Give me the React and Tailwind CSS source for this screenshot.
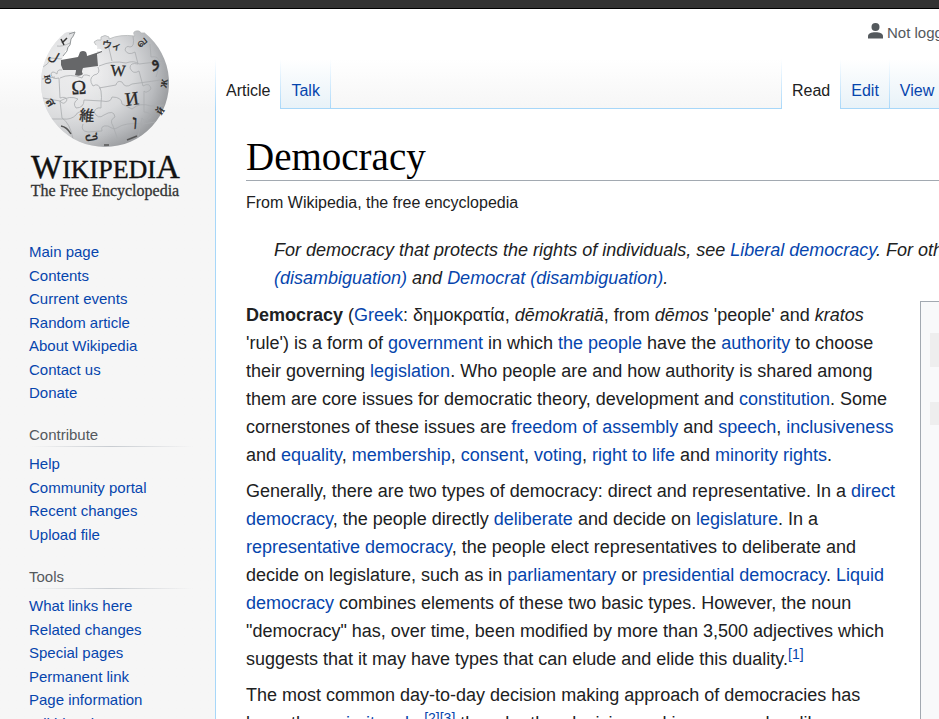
import clsx from "clsx";

const mainLinks = ["Main page", "Contents", "Current events", "Random article", "About Wikipedia", "Contact us", "Donate"];
const contributeLinks = ["Help", "Community portal", "Recent changes", "Upload file"];
const toolLinks = ["What links here", "Related changes", "Special pages", "Permanent link", "Page information", "Wikidata item"];

// letters scattered over the globe
const glyphs = [
  { t: "Ω", x: 79, y: 94, s: 20, r: -3 },
  { t: "W", x: 118, y: 76, s: 16, r: 3 },
  { t: "И", x: 132, y: 105, s: 19, r: -8 },
  { t: "維", x: 87, y: 121, s: 15, r: 5 },
  { t: "ウィ", x: 112, y: 49, s: 10, r: 8 },
  { t: "ו", x: 135, y: 129, s: 20, r: 4 },
  { t: "و", x: 154, y: 66, s: 18, r: -25 },
  { t: "வ", x: 141, y: 46, s: 11, r: -40 },
  { t: "უ", x: 94, y: 142, s: 15, r: 80 },
  { t: "ل", x: 54, y: 61, s: 13, r: 30 },
  { t: "ю", x: 50, y: 84, s: 12, r: 80 },
  { t: "ส", x: 51, y: 107, s: 13, r: 60 },
  { t: "ж", x: 162, y: 88, s: 12, r: -80 },
  { t: "й", x: 159, y: 115, s: 12, r: -55 },
];

function Logo() {
  return (
    <svg viewBox="25 25 160 180" className="block w-40" role="img" aria-label="Wikipedia, The Free Encyclopedia">
      <defs>
        <radialGradient id="ball" cx="92" cy="72" r="82" gradientUnits="userSpaceOnUse">
          <stop offset="0" stopColor="#ededee" />
          <stop offset="0.5" stopColor="#d9dadc" />
          <stop offset="0.78" stopColor="#b9bbbe" />
          <stop offset="1" stopColor="#96989b" />
        </radialGradient>
        <linearGradient id="leftGlow" x1="41" x2="112" y1="80" y2="80" gradientUnits="userSpaceOnUse">
          <stop offset="0" stopColor="#fff" stopOpacity="0.5" />
          <stop offset="1" stopColor="#fff" stopOpacity="0" />
        </linearGradient>
        <path
          id="shell"
          d="M75 32 L74 36 Q70 39 71 43 Q69 44 69 48 L65 51 Q64 57 61 60 L63 70 L76 69 L98 66 L97 51 L102 51 Q101 48 97 49 Q98 46 96 45 L94 42 Q97 39 101 40 L101 37 Q105 34 109 37 L109 39 Q120 34 135 36 Q132 32 136 31 Q140 30 141 33 L145 33 A64 64 0 1 1 65 33 Q69 31 75 32Z"
        />
        <clipPath id="shellClip"><use href="#shell" /></clipPath>
      </defs>
      <use href="#shell" fill="url(#ball)" />
      <use href="#shell" fill="url(#leftGlow)" />
      <g clipPath="url(#shellClip)" fill="none" stroke="#aaacaf" strokeWidth="0.8">
        <path d="M62 70 Q57 69 57 74 Q52 70 51 74 Q52 80 59 78 L60 98 Q66 96 67 100 Q64 106 60 101 L62 118 Q70 123 73 139" />
        <path d="M98 67 Q101 74 94 75 Q88 79 93 86 Q99 82 101 91 Q102 98 101 103 L101 108 Q96 107 94 112 Q98 120 104 115 Q114 109 115 117 Q109 120 113 126 L118 140" />
        <path d="M133 36 Q135 47 130 47 Q126 45 125 50 Q128 56 135 52 L138 64 Q130 62 130 68 Q133 75 139 71 L143 86 Q150 82 151 89 Q146 94 144 91 L144 112 Q151 112 150 118 Q144 122 142 118 L137 142" />
        <path d="M42 79 L55 77 M60 78 Q70 73 82 78 Q83 73 90 76 M99 88 L116 85 Q117 80 122 82 Q125 89 132 84 L168 79" />
        <path d="M43 98 L60 101 Q70 95 78 99 Q72 103 76 108 Q84 108 84 100 L102 101 Q111 103 112 97 Q122 97 122 104 L132 109 Q140 102 151 106 L164 105" />
        <path d="M50 119 L63 119 Q71 120 76 115 Q78 110 85 113 M83 124 Q80 131 88 132 L102 131 Q100 125 108 126 Q114 130 117 128 Q125 122 143 124 L155 122" />
        <path d="M62 59 L51 58 Q48 65 43 67 M70 43 Q62 47 57 46 M99 66 Q113 60 126 63 Q134 60 139 64 L164 61 M107 40 L112 61 M150 44 L151 57 Q159 55 160 64 L156 77" />
      </g>
      <path
        d="M61 60 L78 57 Q79 55 80 52 Q83 50 86 52 Q87 54 87 56 L102 51 L102 52 L97 54 L98 66 L83 68 Q81 72 83 74 Q80 77 75 75 Q76 72 76 70 L63 70 L61 65Z"
        fill="#666769"
      />
      <path d="M96 45 L94 42 Q97 39 101 40 L101 37 Q105 34 109 37 L109 39 Q120 34 135 36 Q132 32 136 31 Q140 30 141 33 L145 33" fill="none" stroke="#b4b6b8" strokeWidth="0.8" />
      <path d="M69 34 L75 32 Q73 37 71 39 L70 45 Q67 47 67 51 L63 56" fill="none" stroke="#94989a" />
      <path d="M62 43 L67 38 M64 45 L61 39" stroke="#333" strokeWidth="1.5" />
      <g fill="#292929" stroke="#292929" strokeWidth="0.3" textAnchor="middle" fontFamily="'Liberation Serif', 'Noto Sans CJK JP', 'DejaVu Sans', serif">
        {glyphs.map((g) => (
          <text key={g.t} x={g.x} y={g.y} fontSize={g.s} transform={`rotate(${g.r} ${g.x} ${g.y - 5})`}>
            {g.t}
          </text>
        ))}
      </g>
      <path d="M61 126 Q67 127 71 134 M127 140 L137 136 M104 145 L109 145" fill="none" stroke="#555" strokeWidth="1.5" />
      <g fontFamily="'Liberation Serif', serif">
        <text x="31" y="178" fontSize="33" fill="#111" stroke="#111" strokeWidth="0.4">
          W<tspan fontSize="26">IKIPEDI</tspan>A
        </text>
        <text x="105" y="196" fontSize="16" textAnchor="middle" fill="#333" stroke="#333" strokeWidth="0.3">The Free Encyclopedia</text>
      </g>
    </svg>
  );
}

function A({ children }) {
  return <a href="#" className="text-[#0645ad] hover:underline">{children}</a>;
}

function Ref({ n }) {
  return (
    <sup className="relative -top-1.5 align-baseline text-sm leading-none">
      <A>[{n}]</A>
    </sup>
  );
}

function Portal({ title, links }) {
  return (
    <nav className="mb-4" aria-label={title || "Navigation"}>
      {title && (
        <>
          <h3 className="pt-1 text-[15px] leading-[22px] text-[#54595d]">{title}</h3>
          <div className="mb-[5px] h-px w-[164px] bg-linear-to-r from-transparent via-[#c8ccd1] to-transparent" />
        </>
      )}
      <ul>
        {links.map((l) => (
          <li key={l} className="text-[15px] leading-[23px] even:pt-px"><A>{l}</A></li>
        ))}
      </ul>
    </nav>
  );
}

function Tab({ label, active, first }) {
  return (
    <div className="flex">
      {first && <div className="w-px bg-linear-to-b from-white to-[#a7d7f9]" />}
      <a
        href="#"
        className={clsx(
          "flex h-[50px] items-end px-[10px] text-base whitespace-nowrap",
          active
            ? "bg-white pb-[6px] text-[#202122]"
            : "border-b border-[#a7d7f9] bg-linear-to-b from-white to-[#e8f2f8] pb-[5px] text-[#0645ad]"
        )}
      >
        {label}
      </a>
      <div className="w-px bg-linear-to-b from-white to-[#a7d7f9]" />
    </div>
  );
}

function Header() {
  return (
    <header className="bg-linear-to-b from-white from-50% to-[#f6f6f6]">
      <div className="flex h-[50px] justify-end">
        <div className="flex w-[372px] items-center gap-1 pb-[2px] text-[15px] text-[#54595d]">
          <svg viewBox="0 0 15 16" className="mb-1 h-4 w-[15px] fill-[#54595d]" aria-hidden="true">
            <circle cx="7.5" cy="4" r="4" />
            <path d="M0 15.5v-2.2C0 10.5 3 9.3 7.5 9.3S15 10.5 15 13.3v2.2z" />
          </svg>
          <span>Not logged in</span>
        </div>
      </div>
      <div className="flex">
        <Tab label="Article" active first />
        <Tab label="Talk" />
        <div className="flex-1 border-b border-[#a7d7f9]" />
        <div className="flex w-[459px]">
          <Tab label="Read" active first />
          <Tab label="Edit" />
          <Tab label="View history" />
          <div className="flex-1 border-b border-[#a7d7f9]" />
        </div>
      </div>
    </header>
  );
}

function Article() {
  return (
    <main className="flex-1 border-l border-[#a7d7f9] bg-white px-[30px] pt-6 text-[#202122]">
      <h1 className="border-b border-[#a2a9b1] font-['Liberation_Serif',serif] text-[39px] leading-[47px] text-black">Democracy</h1>
      <p className="mt-2 text-base leading-7">From Wikipedia, the free encyclopedia</p>
      <p className="mt-[19px] pl-7 text-[18px] leading-7 italic">
        For democracy that protects the rights of individuals, see <A>Liberal democracy</A>. For other uses, see <A>Democracy
        <br />
        (disambiguation)</A> and <A>Democrat (disambiguation)</A>.
      </p>
      <div className="mt-[9px] flex gap-5">
        <div className="flex flex-1 flex-col gap-2 text-[18px] leading-7 whitespace-nowrap">
          <p>
            <b>Democracy</b> (<A>Greek</A>: δημοκρατία, <i>dēmokratiā</i>, from <i>dēmos</i> 'people' and <i>kratos</i>
            <br />
            'rule') is a form of <A>government</A> in which <A>the people</A> have the <A>authority</A> to choose
            <br />
            their governing <A>legislation</A>. Who people are and how authority is shared among
            <br />
            them are core issues for democratic theory, development and <A>constitution</A>. Some
            <br />
            cornerstones of these issues are <A>freedom of assembly</A> and <A>speech</A>, <A>inclusiveness</A>
            <br />
            and <A>equality</A>, <A>membership</A>, <A>consent</A>, <A>voting</A>, <A>right to life</A> and <A>minority rights</A>.
          </p>
          <p>
            Generally, there are two types of democracy: direct and representative. In a <A>direct
            <br />
            democracy</A>, the people directly <A>deliberate</A> and decide on <A>legislature</A>. In a
            <br />
            <A>representative democracy</A>, the people elect representatives to deliberate and
            <br />
            decide on legislature, such as in <A>parliamentary</A> or <A>presidential democracy</A>. <A>Liquid
            <br />
            democracy</A> combines elements of these two basic types. However, the noun
            <br />
            "democracy" has, over time, been modified by more than 3,500 adjectives which
            <br />
            suggests that it may have types that can elude and elide this duality.<Ref n={1} />
          </p>
          <p>
            The most common day-to-day decision making approach of democracies has
            <br />
            been the <A>majority rule</A>,<Ref n={2} /><Ref n={3} /> though other decision making approaches like
          </p>
        </div>
        <aside className="w-[290px] border border-[#a2a9b1] bg-[#f8f9fa] px-[9px] pt-[31px]">
          <div className="h-[34px] bg-[#eee]" />
          <div className="mt-[35px] h-[23px] bg-[#eee]" />
        </aside>
      </div>
    </main>
  );
}

export default function App() {
  return (
    <div className="h-screen overflow-hidden bg-[#f6f6f6] font-['Liberation_Sans',Arial,sans-serif]">
      <div className="h-[9px] border-b border-black bg-[#333]" />
      <div className="flex min-w-[1240px]">
        <div className="w-[215px] shrink-0 bg-linear-to-b from-white from-[50px] to-[#f6f6f6] to-[100px] pt-4 pl-[25px]">
          <Logo />
          <div className="pt-[35px] pl-1">
            <Portal links={mainLinks} />
            <Portal title="Contribute" links={contributeLinks} />
            <Portal title="Tools" links={toolLinks} />
          </div>
        </div>
        <div className="flex min-w-0 flex-1 flex-col">
          <Header />
          <Article />
        </div>
      </div>
    </div>
  );
}
